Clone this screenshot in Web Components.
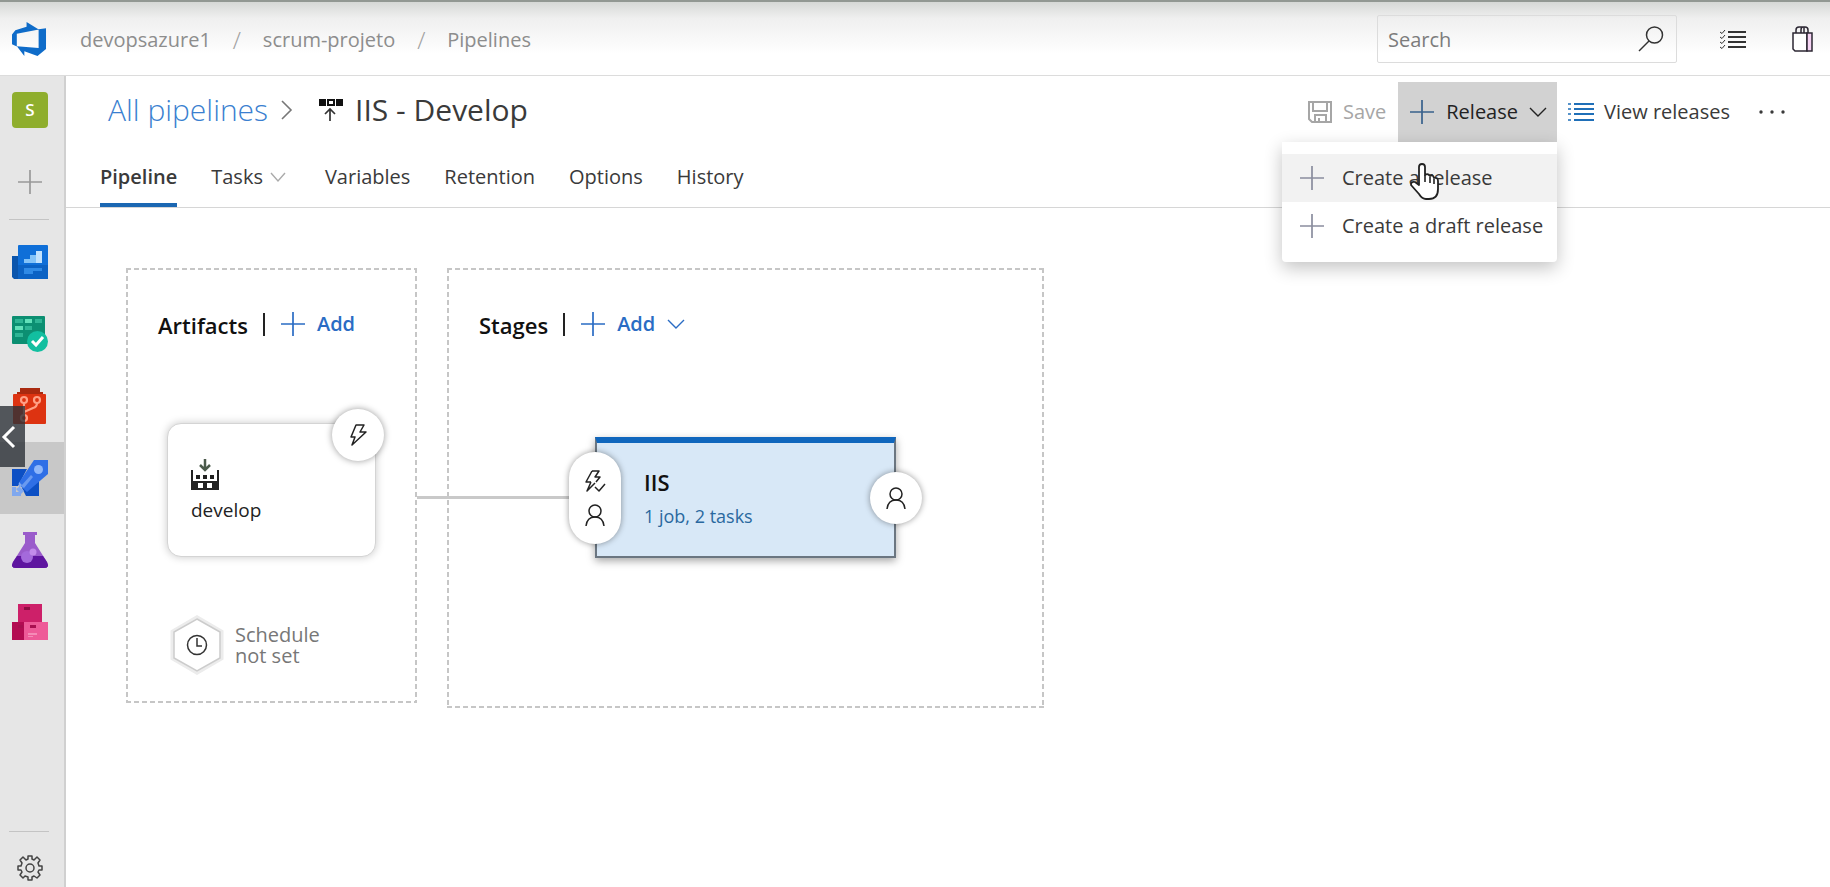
<!DOCTYPE html>
<html lang="en">
<head>
<meta charset="utf-8">
<title>IIS - Develop - Pipelines</title>
<style>
  body { margin: 0; background: #fff; color: #3a3a3a; font: 20px/28px "Segoe UI", "Open Sans", sans-serif; }
</style>
</head>
<body>
<az-app></az-app>
<script>
const ICONS = {
  logo: [34, 34, `<path fill="#0f6cc9" transform="translate(-2.430 -2.430) scale(2.430)" d="M15 3.622v8.512L11.500 15l-5.425-1.975v1.958l-3.071-4.012 8.951.7V4.006zM12.016 4.050 6.994 1v2.001L2.383 4.356 1 6.130v4.029l1.978.873V5.868z"/>`],
  plus: [24, 24, `<path fill="none" stroke="currentColor" stroke-width="1.700" d="M12 0v24M0 12h24"/>`],
  chevdown: [18, 12, `<path fill="none" stroke="currentColor" stroke-width="1.400" d="m1 2 8 8 8-8"/>`],
  chevsmall: [14, 10, `<path fill="none" stroke="currentColor" stroke-width="1.400" d="m0 1 7 8 7-8"/>`],
  chevright: [12, 20, `<path fill="none" stroke="currentColor" stroke-width="1.600" d="m1 1 9 9-9 9"/>`],
  search: [26, 26, `<g fill="none" stroke="currentColor" stroke-width="1.500"><circle cx="16.500" cy="9" r="8"/><path d="M11 15 1 25"/></g>`],
  checklist: [26, 20, `<path fill="none" stroke="currentColor" stroke-width="1.900" d="M8 3h18M8 8h18M8 13h18M8 18h18"/><path fill="none" stroke="currentColor" stroke-width="1" d="m0 3 2 1.500L5 1M0 8l2 1.500L5 6m-5 7 2 1.500L5 11m-5 7 2 1.500L5 16"/>`],
  bag: [22, 26, `<g fill="none" stroke="#2c2733" stroke-width="1.500"><path fill="#fff" d="M1 7h14v18H3l-2-2z"/><path fill="#f6d4f4" d="M15 7h5v18h-5z"/><path d="M4 7V4q0-3 3-3h6q3 0 3 3v3M9 7V4q0-3 2-3M12 1v6"/></g>`],
  release: [24, 22, `<path fill="#111" d="M0 0h7v7H0zM17 0h7v7h-7zM8 0h8v7H8z"/><path fill="#fff" d="M10 2h4v3h-4z"/><path fill="none" stroke="#333" stroke-width="1.700" d="M11 22V10M6 15l5-5 5 5"/>`],
  save: [24, 22, `<g fill="none" stroke="currentColor" stroke-width="2"><path d="M1 1h22v20H4l-3-3z"/><path d="M5 1v9h14V1M7 21v-7h11v7M11 21v-4"/></g>`],
  list: [26, 18, `<path fill="none" stroke="currentColor" stroke-width="1.900" d="M6 1h20M6 6h20M6 11h20M6 17h20"/><path fill="none" stroke="currentColor" stroke-width="1.700" d="M0 1h3M0 6h3M0 11h3M0 17h3"/>`],
  dots: [26, 4, `<circle cx="2" cy="2" r="1.700"/><circle cx="13" cy="2" r="1.700"/><circle cx="24" cy="2" r="1.700"/>`],
  bolt: [20, 24, `<path fill="none" stroke="#222" stroke-width="1.500" stroke-linejoin="round" d="M8 2h8l-4 7h6L4 22l3-8H3z"/>`],
  boltcheck: [22, 24, `<g fill="none" stroke="#222" stroke-width="1.500" stroke-linejoin="round"><path d="M8 2h7l-4 6h5l-4 5M7 13H2L8 2M7 13 3 22l8-8M11 18l4 4 6-7"/></g>`],
  person: [22, 24, `<g fill="none" stroke="#222" stroke-width="1.500"><circle cx="11" cy="8" r="6"/><path d="M2 23q1-9 9-9t9 9"/></g>`],
  build: [28, 32, `<path d="M0 11h2v11h24V11h2v20H0z"/><path d="M5 16h4v4H5zM12 16h4v4h-4zM19 16h4v4h-4z"/><path fill="#fff" d="M7 24h5v5H7zM16 24h5v5h-5z"/><path fill="none" stroke="#4b5a4b" stroke-width="2.500" d="M14 0v11M9 6l5 5 5-5"/>`],
  hexclock: [54, 60, `<path fill="#fff" stroke="#ececec" stroke-width="5" d="M27 3 51 17v26L27 57 3 43V17z"/><path fill="#fff" stroke="#ccc" stroke-width="1.500" d="M27 4 50 17v26L27 56 4 43V17z"/><g fill="none" stroke="#333" stroke-width="1.500"><circle cx="27" cy="30" r="9.500"/><path d="M27 23v8h5"/></g>`],
  gear: [26, 26, `<g fill="none" stroke="#444" stroke-width="1.500" stroke-linejoin="round"><path d="m11 4 0-3h4v3l2 1 3-3 3 3-2 3 1 3h3v4h-3l-1 2 2 3-3 3-3-2-2 1v3h-4v-3l-3-1-2 2-3-3 2-3-1-2H1v-4h3l1-3-2-3 3-3 3 3z"/><circle cx="13" cy="13" r="4"/></g>`],
  overview: [36, 34, `<path fill="#0a55ac" d="M0 11h7v23H2l-2-2z"/><rect x="6" width="30" height="34" rx="1" fill="#0f6fd8"/><path fill="#0b62c4" d="M6 20h30v14H6z"/><path fill="#83c3f8" d="M12 14h6v-4h6V6h6v12H12z"/><path fill="#c2e2fd" d="M24 6h6v12h-6z"/><path fill="#2f8ae6" d="M12 23h18v3H21v3h-9z"/>`],
  boards: [36, 36, `<rect width="33" height="28" rx="1" fill="#0c8f72"/><path fill="#2fb595" d="M3 3h8v4H3zM23 3h7v4h-7zM13 10h7v4h-7zM3 17h8v4H3z"/><path fill="#62e0b9" d="M13 3h7v4h-7zM3 10h8v4H3z"/><circle cx="25.500" cy="25.500" r="10.500" fill="#12bfa0"/><path fill="none" stroke="#fff" stroke-width="3" d="m20 25 4 4 7-8"/>`],
  repos: [34, 36, `<path fill="#a92a10" d="M7 0h20v4h3v5H4V4h3z"/><rect y="6" width="33" height="30" rx="1" fill="#dd3311"/><g fill="none" stroke="#ff9f85" stroke-width="2.200"><circle cx="11" cy="12" r="3"/><circle cx="24" cy="12" r="3"/><circle cx="11" cy="30" r="3"/><path d="M11 15v12M24 15q0 4-4 5l-9 4"/></g>`],
  pipelines: [36, 36, `<path fill="#0c4fc4" d="M0 9h15l-9 17H0zM27 20v16H14l-4-8z"/><path fill="#2f6fe6" d="M22 0h14v14L15 32l-9-8z"/><path fill="#6a9af0" d="m9 26 10-11 2 2-9 11z"/><circle cx="26.500" cy="9.500" r="4.500" fill="#8fb7fa"/><path fill="#80a8ee" d="M0 27h4v5h5v4H0zM7 22l3 3-2 2 4 4-3 3-5-5 3-2z"/>`],
  test: [36, 36, `<path fill="#9a5ccb" d="M11 0h14v3h-2v8l12 19q3 6-3 6H4q-6 0-3-6l12-19V3h-2z"/><path fill="#5e159f" d="M5 24h26l4 6q3 6-3 6H4q-6 0-3-6z"/><circle cx="15" cy="25" r="6" fill="#a46adb"/><circle cx="21" cy="20" r="3.500" fill="#c28bea"/>`],
  artifacts: [36, 36, `<path fill="#cd2069" d="M6 0h24v18H6z"/><path fill="#8f0c42" d="M12 3h6v3h-6z"/><path fill="#b30c52" d="M0 18h12v18H0z"/><path fill="#ee5a98" d="M12 18h24v18H12z"/><path fill="#a80f50" d="M18 21h6v3h-6zM6 21h5v3H6z"/><path fill="#f58bb7" d="M16 29h9v2h-9zm0 3h5v1h-5z"/>`],
  back: [14, 22, `<path fill="none" stroke="#fff" stroke-width="3" d="M12 1 2 11l10 10"/>`],
  hand: [30, 38, `<path fill="#fff" stroke="#222" stroke-width="1.800" stroke-linejoin="round" d="M9 22V4q0-3 3-3t3 3v8q3-2 5 1 3-2 4 2 4-1 4 3v8q0 10-9 10h-3q-4 0-7-5L1 22q0-4 4-3z"/><path stroke="#222" stroke-width="1.600" d="M15 12v7M20 14v6M24 16v5"/>`]
};
const define = (name, html) => customElements.define(name, class extends HTMLElement {
  connectedCallback() {
    if (!this.shadowRoot) this.attachShadow({ mode: "open" }).innerHTML =
      `<style>*{box-sizing:border-box}a{color:inherit;text-decoration:none}button{font:inherit;color:inherit;background:none;border:0;padding:0;margin:0}</style>` +
      (typeof html === "function" ? html(this) : html);
  }
});

define("az-icon", el => {
  const [w, h, body] = ICONS[el.getAttribute("name")];
  return `<style>:host{display:inline-flex;flex:none}svg{display:block;overflow:visible}</style>
    <svg width="${w}" height="${h}" viewBox="0 0 ${w} ${h}" fill="currentColor" aria-hidden="true">${body}</svg>`;
});

define("az-header", `
<style>
  :host { display: block; }
  header { height: 76px; display: flex; align-items: center; padding: 0 16px 0 12px; border-top: 2px solid #929893; border-bottom: 1px solid #dcdcdc;
    background: linear-gradient(#d6d8d6, #efefef 16px, #fff 52px); color: #8d8d8d; }
  .logo, button { display: flex; }
  nav { display: flex; align-items: center; gap: 20px; margin-left: 34px; padding-top: 2px; }
  .sep { width: 12px; text-align: center; color: #a0a0a0; font-size: 24px; font-weight: 300; }
  .search { margin-left: auto; width: 300px; height: 48px; display: flex; align-items: center; border: 1px solid #dcdcdc; border-radius: 2px; padding: 0 12px 0 10px; color: #333; }
  input { flex: 1; min-width: 0; border: 0; outline: 0; padding: 2px 0 0; background: none; font: inherit; color: #333; }
  input::placeholder { color: #7c7c7c; opacity: 1; }
  .tools { display: flex; align-items: center; gap: 46px; margin-left: 43px; color: #333; }
</style>
<header>
  <a class="logo" href="#" aria-label="Azure DevOps"><az-icon name="logo"></az-icon></a>
  <nav aria-label="Breadcrumb"><a href="#">devopsazure1</a><span class="sep">/</span><a href="#">scrum-projeto</a><span class="sep">/</span><a href="#">Pipelines</a></nav>
  <label class="search"><input type="text" placeholder="Search" aria-label="Search"><az-icon name="search"></az-icon></label>
  <div class="tools"><button aria-label="Work items"><az-icon name="checklist"></az-icon></button><button aria-label="Marketplace"><az-icon name="bag"></az-icon></button></div>
</header>`);

define("az-nav-item", el => `
<style>
  :host { display: block; }
  a { display: flex; align-items: center; justify-content: center; height: 72px; padding-right: 4px; }
  :host([selected]) a { background: #c8c8c8; }
</style>
<a href="#" aria-label="${el.getAttribute("label")}"><az-icon name="${el.getAttribute("icon")}"></az-icon></a>`);

define("az-sidebar", `
<style>
  :host { display: flex; flex-direction: column; position: relative; background: #e6e6e6; border-right: 2px solid #d0d0d0; }
  .badge { display: flex; align-items: center; justify-content: center; width: 36px; height: 36px; margin: 16px 12px; border-radius: 4px; background: #8fae2d; color: #fff; font-size: 17px; font-weight: 600; }
  .new { height: 75px; display: flex; align-items: center; justify-content: center; padding-right: 4px; color: #999; }
  hr { width: 40px; height: 1px; border: 0; margin: 0 0 0 9px; background: #c4c4c4; }
  nav { padding-top: 6px; flex: 1; }
  .gear { display: flex; justify-content: center; padding: 23px 4px 6px 0; }
  .tab { position: absolute; left: 0; top: 330px; width: 25px; height: 61px; display: flex; align-items: center; padding-left: 2px; background: rgba(45,50,56,.8); }
</style>
<a class="badge" href="#">S</a>
<button class="new" aria-label="Add"><az-icon name="plus"></az-icon></button>
<hr>
<nav aria-label="Project">
  <az-nav-item icon="overview" label="Overview"></az-nav-item>
  <az-nav-item icon="boards" label="Boards"></az-nav-item>
  <az-nav-item icon="repos" label="Repos"></az-nav-item>
  <az-nav-item icon="pipelines" label="Pipelines" selected></az-nav-item>
  <az-nav-item icon="test" label="Test Plans"></az-nav-item>
  <az-nav-item icon="artifacts" label="Artifacts"></az-nav-item>
</nav>
<hr>
<a class="gear" href="#" aria-label="Project settings"><az-icon name="gear"></az-icon></a>
<button class="tab" aria-label="Collapse"><az-icon name="back"></az-icon></button>`);

define("az-release-menu", `
<style>
  :host { display: block; position: relative; }
  .trigger { display: flex; align-items: center; height: 60px; padding: 0 10px 0 12px; background: #d2d2d2; color: #222; }
  .trigger span { margin: 0 11px 0 12px; }
  .trigger az-icon:first-child { color: #38618c; }
  .menu { position: absolute; z-index: 5; right: 0; top: 60px; width: 275px; padding: 12px 0; background: #fff; border-radius: 0 0 4px 4px; box-shadow: 0 6px 18px rgba(0,0,0,.24); }
  .menu button { display: flex; align-items: center; gap: 18px; width: 100%; height: 48px; padding-left: 18px; text-align: left; white-space: nowrap; color: #3a3a3a; }
  .menu button.hover { background: #f2f2f2; }
  .menu button az-icon { color: #8a8d9e; }
  .cursor { position: absolute; left: 128px; top: 21px; }
</style>
<button class="trigger" aria-haspopup="menu" aria-expanded="true"><az-icon name="plus"></az-icon><span>Release</span><az-icon name="chevdown"></az-icon></button>
<div class="menu" role="menu">
  <button class="hover" role="menuitem"><az-icon name="plus"></az-icon>Create a release</button>
  <button role="menuitem"><az-icon name="plus"></az-icon>Create a draft release</button>
  <az-icon class="cursor" name="hand"></az-icon>
</div>`);

define("az-title-bar", `
<style>
  :host { display: flex; align-items: flex-start; padding: 6px 45px 0 42px; }
  h1 { display: flex; align-items: center; height: 56px; margin: 0; font-size: 30px; line-height: 40px; font-weight: 400; white-space: nowrap; flex: 1; }
  h1 a { color: #3a7fd0; font-weight: 300; }
  h1 .chev { margin: 0 26px 0 13px; color: #777; }
  h1 span { margin-left: 12px; }
  .bar { display: flex; align-items: center; height: 60px; white-space: nowrap; }
  .bar button { display: flex; align-items: center; }
  .save { gap: 11px; color: #a6a6a6; padding-right: 12px; }
  .view { gap: 10px; padding: 0 29px 0 11px; }
  .view az-icon { color: #1f6fb8; }
</style>
<h1><a href="#">All pipelines</a><az-icon class="chev" name="chevright"></az-icon><az-icon name="release"></az-icon><span>IIS - Develop</span></h1>
<div class="bar">
  <button class="save" disabled><az-icon name="save"></az-icon>Save</button>
  <az-release-menu></az-release-menu>
  <button class="view"><az-icon name="list"></az-icon>View releases</button>
  <button aria-label="More actions"><az-icon name="dots"></az-icon></button>
</div>`);

define("az-tabs", `
<style>
  :host { display: block; border-bottom: 1px solid #d6d6d6; }
  nav { display: flex; gap: 34px; padding-left: 34px; height: 65px; }
  a { display: flex; align-items: center; padding-top: 8px; border-bottom: 4px solid transparent; }
  a[aria-current] { font-weight: 600; border-color: #1b67b2; }
  az-icon { margin: 0 6px 0 8px; color: #aaa; }
</style>
<nav aria-label="Pipeline sections">
  <a href="#" aria-current="page">Pipeline</a><a href="#">Tasks<az-icon name="chevsmall"></az-icon></a><a href="#">Variables</a><a href="#">Retention</a><a href="#">Options</a><a href="#">History</a>
</nav>`);

define("az-panel", el => `
<style>
  :host { --h: repeating-linear-gradient(90deg, #c6c6c6 0 5px, transparent 5px 8px); --v: repeating-linear-gradient(#c6c6c6 0 5px, transparent 5px 8px);
    display: block; padding: 1px; background: var(--h) top / 100% 2px no-repeat, var(--h) bottom / 100% 2px no-repeat, var(--v) left / 2px 100% no-repeat, var(--v) right / 2px 100% no-repeat; box-sizing: border-box; }
  header { display: flex; align-items: center; height: 28px; margin: 41px 0 0 31px; }
  h2 { margin: 2px 0 0; font-size: 22px; font-weight: 600; color: #111; }
  i { width: 2px; height: 23px; margin: 0 16px 0 15px; background: #222; }
  button { display: flex; align-items: center; gap: 12px; color: #2a6cc4; font-weight: 600; }
</style>
<header><h2>${el.getAttribute("heading")}</h2><i></i>
<button><az-icon name="plus"></az-icon>Add${el.hasAttribute("menu") ? '<az-icon name="chevdown"></az-icon>' : ""}</button></header>
<slot></slot>`);

define("az-artifact", `
<style>
  :host { display: flex; flex-direction: column; position: relative; width: 209px; height: 134px; padding: 35px 22px 0 23px; border: 1px solid #d4d4d4; border-radius: 14px; background: #fff; box-shadow: 0 0 8px rgba(0,0,0,.22); box-sizing: border-box; color: #222; font-size: 19px; }
  span { margin-top: 5px; }
  .trigger { position: absolute; right: -9px; top: -15px; width: 52px; height: 52px; border-radius: 50%; background: #fff; box-shadow: 0 0 7px rgba(0,0,0,.4); display: flex; align-items: center; justify-content: center; }
</style>
<az-icon name="build"></az-icon><span><slot></slot></span>
<button class="trigger" aria-label="Continuous deployment trigger"><az-icon name="bolt"></az-icon></button>`);

define("az-schedule", `
<style>
  :host { display: flex; align-items: center; gap: 11px; color: #777; line-height: 21px; }
  span { width: 90px; }
</style>
<az-icon name="hexclock"></az-icon><span><slot></slot></span>`);

define("az-stage", `
<style>
  :host { display: block; position: relative; width: 301px; height: 121px; box-sizing: border-box; padding: 25px 0 0 47px; background: #d8e8f7; border: 2px solid #6b7681; border-top: 6px solid #0f66bd; box-shadow: 0 3px 8px rgba(0,0,0,.35); }
  h3 { margin: 0 0 6px; font-size: 22px; line-height: 28px; font-weight: 600; color: #111; }
  a { color: #2a689f; font-size: 18px; }
  button { position: absolute; display: flex; flex-direction: column; align-items: center; justify-content: center; gap: 10px; width: 52px; background: #fff; border-radius: 26px; box-shadow: 0 0 6px rgba(0,0,0,.4); }
  .pre { left: -28px; top: 9px; height: 92px; }
  .post { right: -28px; top: 29px; height: 52px; }
</style>
<h3><slot></slot></h3><a href="#">1 job, 2 tasks</a>
<button class="pre" aria-label="Pre-deployment conditions"><az-icon name="boltcheck"></az-icon><az-icon name="person"></az-icon></button>
<button class="post" aria-label="Post-deployment conditions"><az-icon name="person"></az-icon></button>`);

define("az-canvas", `
<style>
  :host { display: flex; align-items: flex-start; gap: 30px; padding: 60px; }
  .artifacts { position: relative; flex: none; width: 291px; padding-bottom: 28px; }
  .stages { flex: none; width: 597px; padding-bottom: 150px; }
  .wire { position: absolute; left: 100%; top: 228px; width: 154px; height: 3px; background: #c9c9c9; }
  az-artifact { margin: 85px 0 0 40px; }
  az-schedule { margin: 58px 0 0 43px; }
  az-stage { margin: 99px 0 0 147px; }
</style>
<az-panel class="artifacts" heading="Artifacts"><az-artifact>develop</az-artifact><az-schedule>Schedule not set</az-schedule><div class="wire"></div></az-panel>
<az-panel class="stages" heading="Stages" menu><az-stage>IIS</az-stage></az-panel>`);

define("az-app", `
<style>
  :host { display: grid; grid-template: auto 1fr / 66px 1fr; min-height: 100vh; }
  az-header { grid-column: 1 / 3; }
  main { min-width: 0; }
</style>
<az-header></az-header><az-sidebar></az-sidebar>
<main><az-title-bar></az-title-bar><az-tabs></az-tabs><az-canvas></az-canvas></main>`);
</script>
</body>
</html>
